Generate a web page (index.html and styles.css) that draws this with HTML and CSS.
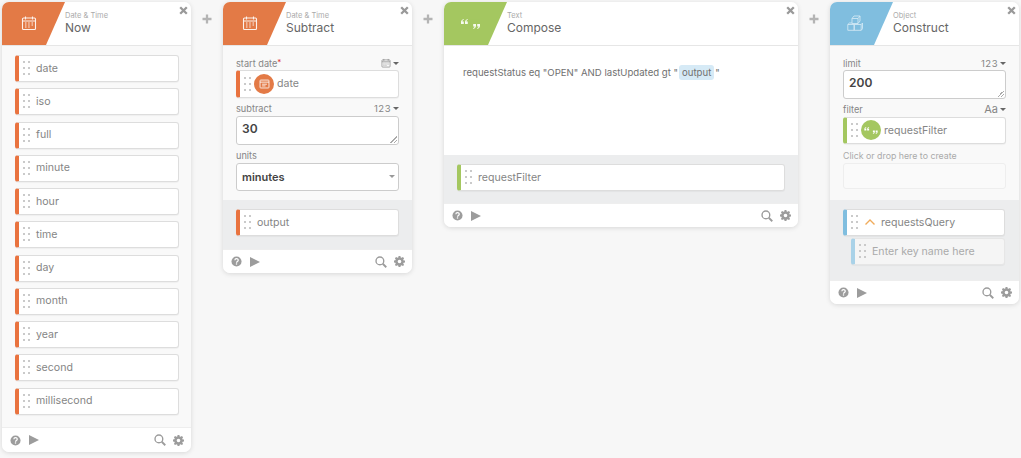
FILE: index.html
```html
<!DOCTYPE html>
<html lang="en">
<head>
<meta charset="utf-8">
<title>Flow</title>
<link rel="stylesheet" href="styles.css">
</head>
<body>
<svg class="defs" width="0" height="0">
  <symbol id="cal" viewBox="0 0 16 16"><path d="M2.500 3h11a1 1 0 0 1 1 1v9.500a1 1 0 0 1-1 1h-11a1 1 0 0 1-1-1V4a1 1 0 0 1 1-1z" fill="none" stroke="currentColor" stroke-width="1.100"/><path d="M4.500 1.500v3M11.500 1.500v3M1.500 6h13" stroke="currentColor" stroke-width="1.100" fill="none"/><path d="M4 8h1.500M7.200 8h1.500M10.500 8h1.500M4 10h1.500M7.200 10h1.500M10.500 10h1.500M4 12h1.500M7.200 12h1.500" stroke="currentColor" stroke-width="1" fill="none"/></symbol>
  <symbol id="calsm" viewBox="0 0 16 16"><path d="M2.500 3h11a1 1 0 0 1 1 1v9.500a1 1 0 0 1-1 1h-11a1 1 0 0 1-1-1V4a1 1 0 0 1 1-1z" fill="none" stroke="currentColor" stroke-width="1.200"/><path d="M1.500 6h13M4.500 9h7M4.500 11.500h5" stroke="currentColor" stroke-width="1.200" fill="none"/></symbol>
  <symbol id="quote" viewBox="0 0 19 10"><path d="M2.800 0C1 .5 0 1.600 0 3.200V5h2.800V2.400H1.500c0-.8.5-1.300 1.300-1.600zM6.800 0C5 .5 4 1.600 4 3.200V5h2.800V2.400H5.500c0-.8.500-1.300 1.300-1.600zM12.200 10c1.800-.5 2.800-1.600 2.800-3.200V5h-2.800v2.600h1.300c0 .8-.5 1.300-1.300 1.600zM16.200 10c1.800-.5 2.800-1.600 2.800-3.200V5h-2.800v2.600h1.300c0 .8-.5 1.300-1.300 1.600z" fill="currentColor"/></symbol>
  <symbol id="cubes" viewBox="0 0 16 16"><path d="M5 3.500h6v5H5zM5 3.500L7 1h6l-2 2.500M13 1v5l-2 2.500M.8 9.500h6.400v5.800H.8zM.8 9.500L2.500 8H5M7.200 9.500h7v5.800h-7zM14.200 9.500l1.300-1.500v5.800l-1.300 1.500" fill="none" stroke="currentColor" stroke-width=".8"/></symbol>
  <symbol id="help" viewBox="0 0 12 12"><circle cx="6" cy="6" r="5.500" fill="currentColor"/><path d="M4.200 4.700c0-2.300 3.700-2.300 3.700-.1 0 1.400-1.900 1.300-1.900 2.700" fill="none" stroke="#fff" stroke-width="1.300"/><rect x="5.300" y="8" width="1.400" height="1.400" fill="#fff"/></symbol>
  <symbol id="search" viewBox="0 0 13 13"><circle cx="5.300" cy="5.300" r="4.200" fill="none" stroke="currentColor" stroke-width="1.500"/><path d="M8.400 8.400l3.800 3.800" stroke="currentColor" stroke-width="2"/></symbol>
  <symbol id="gear" viewBox="0 0 12 12"><path fill="currentColor" fill-rule="evenodd" d="M5 0h2l.3 1.600 1 .4L9.700 1.100l1.300 1.300-.9 1.400.4 1L12 5v2l-1.500.3-.4 1 .9 1.400-1.300 1.300-1.400-.9-1 .4L7 12H5l-.3-1.500-1-.4-1.400.9L1 9.700l.9-1.400-.4-1L0 7V5l1.500-.3.4-1L1 2.400 2.300 1.100l1.400.9 1-.4zM6 4a2 2 0 1 0 0 4 2 2 0 0 0 0-4z"/></symbol>
  <symbol id="close" viewBox="0 0 9 9"><path d="M1.200 1.200l6.600 6.600M7.800 1.200L1.200 7.800" stroke="currentColor" stroke-width="2.300"/></symbol>
  <symbol id="plus" viewBox="0 0 10 10"><path d="M5 .5v9M.5 5h9" stroke="currentColor" stroke-width="2.300"/></symbol>
</svg>
<main class="board">
  <section class="card card-now">
    <header class="head orange">
      <div class="badge"><svg class="hicon"><use href="#cal"/></svg></div>
      <div class="titles"><small>Date &amp; Time</small><h2>Now</h2></div>
      <svg class="x"><use href="#close"/></svg>
    </header>
    <div class="list">
      <div class="pill orange-bar"><i class="dots"></i><span>date</span></div>
      <div class="pill orange-bar"><i class="dots"></i><span>iso</span></div>
      <div class="pill orange-bar"><i class="dots"></i><span>full</span></div>
      <div class="pill orange-bar"><i class="dots"></i><span>minute</span></div>
      <div class="pill orange-bar"><i class="dots"></i><span>hour</span></div>
      <div class="pill orange-bar"><i class="dots"></i><span>time</span></div>
      <div class="pill orange-bar"><i class="dots"></i><span>day</span></div>
      <div class="pill orange-bar"><i class="dots"></i><span>month</span></div>
      <div class="pill orange-bar"><i class="dots"></i><span>year</span></div>
      <div class="pill orange-bar"><i class="dots"></i><span>second</span></div>
      <div class="pill orange-bar"><i class="dots"></i><span>millisecond</span></div>
    </div>
    <footer class="foot"><svg class="f-help"><use href="#help"/></svg><b class="play"></b><span class="grow"></span><svg class="f-search"><use href="#search"/></svg><svg class="f-gear"><use href="#gear"/></svg></footer>
  </section>
  <div class="add"><svg class="plus"><use href="#plus"/></svg></div>

  <section class="card">
    <header class="head orange">
      <div class="badge"><svg class="hicon"><use href="#cal"/></svg></div>
      <div class="titles"><small>Date &amp; Time</small><h2>Subtract</h2></div>
      <svg class="x"><use href="#close"/></svg>
    </header>
    <div class="form">
      <div class="lab"><span>start date<em>*</em></span><span class="type"><svg class="tcal"><use href="#cal"/></svg><b class="caret"></b></span></div>
      <div class="pill orange-bar tall"><i class="dots"></i><span class="round orange-bg"><svg class="rcal"><use href="#calsm"/></svg></span><span class="after-round">date</span></div>
      <div class="lab l2"><span>subtract</span><span class="type">123<b class="caret"></b></span></div>
      <div class="area">30</div>
      <div class="lab l3"><span>units</span></div>
      <div class="select">minutes<b class="caret small"></b></div>
    </div>
    <div class="outs o-subtract"><div class="pill orange-bar"><i class="dots"></i><span>output</span></div></div>
    <footer class="foot"><svg class="f-help"><use href="#help"/></svg><b class="play"></b><span class="grow"></span><svg class="f-search"><use href="#search"/></svg><svg class="f-gear"><use href="#gear"/></svg></footer>
  </section>
  <div class="add"><svg class="plus"><use href="#plus"/></svg></div>

  <section class="card card-wide">
    <header class="head green">
      <div class="badge"><svg class="hquote"><use href="#quote"/></svg></div>
      <div class="titles"><small>Text</small><h2>Compose</h2></div>
      <svg class="x"><use href="#close"/></svg>
    </header>
    <div class="compose">requestStatus eq "OPEN" AND lastUpdated gt "<mark>output</mark>"</div>
    <div class="outs o-compose"><div class="pill green-bar"><i class="dots"></i><span>requestFilter</span></div></div>
    <footer class="foot"><svg class="f-help"><use href="#help"/></svg><b class="play"></b><span class="grow"></span><svg class="f-search"><use href="#search"/></svg><svg class="f-gear"><use href="#gear"/></svg></footer>
  </section>
  <div class="add"><svg class="plus"><use href="#plus"/></svg></div>

  <section class="card">
    <header class="head blue">
      <div class="badge"><svg class="hcubes"><use href="#cubes"/></svg></div>
      <div class="titles"><small>Object</small><h2>Construct</h2></div>
      <svg class="x"><use href="#close"/></svg>
    </header>
    <div class="form">
      <div class="lab"><span>limit</span><span class="type">123<b class="caret"></b></span></div>
      <div class="area">200</div>
      <div class="lab l4"><span>filter</span><span class="type aa">Aa<b class="caret"></b></span></div>
      <div class="pill green-bar"><i class="dots"></i><span class="round green-bg"><svg class="rquote"><use href="#quote"/></svg></span><span class="after-round">requestFilter</span></div>
      <div class="lab l5"><span>Click or drop here to create</span></div>
      <div class="dropbox"></div>
    </div>
    <div class="outs o-construct">
      <div class="pill blue-bar"><i class="dots"></i><svg class="chev" viewBox="0 0 12 8"><path d="M1.500 6.500L6 2l4.500 4.500" fill="none" stroke="currentColor" stroke-width="1.400"/></svg><span>requestsQuery</span></div>
      <div class="pill ghost"><i class="dots"></i><span>Enter key name here</span></div>
    </div>
    <footer class="foot"><svg class="f-help"><use href="#help"/></svg><b class="play"></b><span class="grow"></span><svg class="f-search"><use href="#search"/></svg><svg class="f-gear"><use href="#gear"/></svg></footer>
  </section>
</main>
</body>
</html>
```
FILE: styles.css
```css
* { box-sizing: border-box; }
html, body { margin: 0; height: 100%; }
body {
  background: #f7f7f7;
  font-family: "Inter", "Open Sans", sans-serif;
  color: #858585;
  overflow: hidden;
}
.defs { position: absolute; }
svg { display: block; }
.board { display: flex; align-items: flex-start; padding: 2px 2px 0; }
.card {
  width: 189px;
  flex: none;
  background: #f9f9f9;
  border-radius: 7px;
  box-shadow: 0 1px 5px rgba(0, 0, 0, .13);
  overflow: hidden;
}
.card-wide { width: 354px; }
.add { width: 32px; flex: none; display: flex; justify-content: center; padding-top: 12px; }
.plus { width: 10px; height: 10px; color: #b4b4b4; }

.head {
  position: relative;
  height: 44px;
  display: flex;
  background: #fff;
  border-bottom: 1px solid #e6e6e6;
}
.badge {
  width: 63px;
  height: 43px;
  flex: none;
  clip-path: polygon(0 0, 100% 0, 44px 100%, 0 100%);
  color: #fff;
  padding: 13px 0 0 19px;
}
.orange .badge { background: #e37a46; }
.green .badge { background: #a4c760; }
.blue .badge { background: #80bedf; }
.hicon { width: 16px; height: 16px; opacity: .9; }
.hquote { width: 19px; height: 10px; margin: 4px 0 0 -2px; opacity: .9; }
.hcubes { width: 16px; height: 16px; margin-left: -2px; color: #d9ecf6; }
.titles { padding: 9px 0 0 0; }
.titles small { display: block; font-size: 7.500px; line-height: 9px; color: #aaa; }
.titles h2 { margin: 0; font-size: 12px; line-height: 15px; font-weight: 400; color: #666; }
.x { position: absolute; top: 4px; right: 3px; width: 9px; height: 9px; color: #999; }

.list { padding: 9px 12px 0 13px; height: 381px; }
.pill {
  display: flex;
  align-items: center;
  height: 27px;
  padding-bottom: 1px;
  background: #fff;
  border: 1px solid #ddd;
  border-left: 4px solid #e37a46;
  border-radius: 3px;
  font-size: 10.600px;
  color: #858585;
  box-shadow: 0 1px 1px rgba(0, 0, 0, .04);
}
.list .pill { margin-bottom: 6.250px; }
.orange-bar { border-left-color: #e9733f; }
.green-bar { border-left-color: #a4c760; }
.blue-bar { border-left-color: #80bedf; }
.dots {
  width: 7px;
  height: 14px;
  margin-left: 4px;
  margin-right: 6px;
  flex: none;
  background: radial-gradient(circle at 1px 1px, #cacaca 1.100px, transparent 1.500px) 0 0 / 5px 6px;
}
.form { padding: 10px 13px 0; height: 154px; }
.lab { display: flex; justify-content: space-between; align-items: center; height: 14px; font-size: 9.200px; color: #858585; }
.lab em { color: #d33; font-style: normal; font-size: 8px; vertical-align: 2px; }
.type { display: flex; align-items: center; gap: 2px; font-size: 9.500px; letter-spacing: .5px; }
.aa { font-size: 11px; letter-spacing: 0; }
.tcal { width: 10px; height: 10px; }
.caret { display: inline-block; border: 3px solid transparent; border-top: 3.500px solid #666; border-bottom: 0; }
.caret.small { border-top-color: #999; }
.tall { height: 28px; }
.round { width: 20px; height: 20px; border-radius: 50%; display: flex; align-items: center; justify-content: center; color: #fff; flex: none; margin-left: -3px; }
.orange-bg { background: #e37a46; }
.green-bg { background: #a4c760; }
.rcal { width: 11px; height: 11px; }
.rquote { width: 14px; height: 7px; }
.after-round { margin-left: 3px; }
.l2 { margin: 3px 0 1px; }
.l3 { margin-top: 3px; margin-bottom: 1px; }
.l4 { margin: 3px 0 1px; }
.l5 { margin-top: 4px; margin-bottom: 1px; color: #aaa; font-size: 8.800px; }
.area {
  position: relative;
  height: 29px;
  background: #fff;
  border: 1px solid #ccc;
  border-radius: 3px;
  padding: 4px 5px;
  font-size: 12px;
  font-weight: 600;
  color: #444;
}
.area::after {
  content: "";
  position: absolute;
  right: 1px;
  bottom: 1px;
  width: 7px;
  height: 7px;
  background: linear-gradient(135deg, transparent 50%, #aaa 50%, #aaa 58%, transparent 58%, transparent 74%, #aaa 74%, #aaa 82%, transparent 82%);
}
.select {
  display: flex;
  align-items: center;
  justify-content: space-between;
  height: 28px;
  padding: 0 3px 1px 5px;
  background: #fff;
  border: 1px solid #ccc;
  border-radius: 3px;
  font-size: 11px;
  font-weight: 600;
  color: #444;
}
.dropbox { height: 26px; background: #fafafa; border: 1px solid #eee; border-radius: 3px; }
.outs { background: #ecedee; }
.o-subtract { height: 49px; padding: 9px 13px 0; }
.o-compose { height: 48px; padding: 9px 13px 0; }
.o-construct { height: 80px; padding: 9px 14px 0 13px; }
.chev { width: 12px; height: 8px; margin: 0 5px 0 0; color: #f0ab5b; }
.ghost { margin: 2px 0 0 8px; background: #f5f5f5; color: #aaa; border-color: #e6e6e6; border-left-color: #a9d2e8; }

.compose { background: #fff; height: 109px; padding: 19px 19px; font-size: 9.600px; line-height: 16px; color: #707070; white-space: nowrap; }
.compose mark { background: #d6eaf6; color: #707070; padding: 2px 3px; margin: 0 1px; border-radius: 3px; }

.foot { display: flex; align-items: center; height: 24px; padding: 0 7px 0 8px; background: #fff; border-top: 1px solid #eee; color: #9c9c9c; }
.card-now .foot { height: 25px; }
.f-help { width: 11px; height: 11px; margin-right: 8px; }
.play { width: 0; height: 0; border-left: 10px solid #9c9c9c; border-top: 5px solid transparent; border-bottom: 5px solid transparent; }
.grow { flex: 1; }
.f-search { width: 12px; height: 12px; margin-right: 7px; }
.f-gear { width: 11px; height: 11px; }
```
